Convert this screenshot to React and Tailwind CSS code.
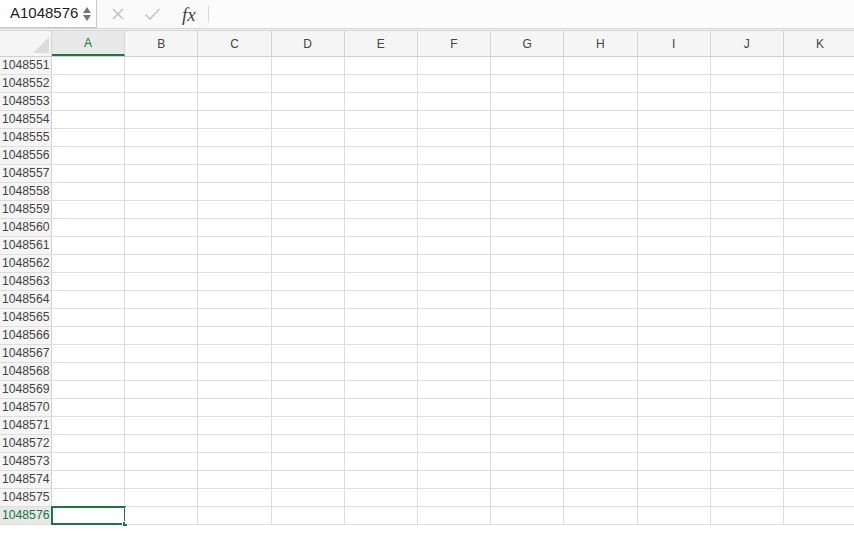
const COLS = ["A", "B", "C", "D", "E", "F", "G", "H", "I", "J", "K"];
const FIRST_ROW = 1048551;
const ROW_COUNT = 26;

const font = { fontFamily: '"Liberation Sans", Arial, sans-serif' };

const FormulaBar = () => (
  <div className="flex h-[29px] bg-[#fafafa] border-b border-[#d6d6d6]">
    <div className="flex w-[97px] items-center justify-between bg-white border-r border-b border-[#c8c8c8] pl-[10px] pr-[5px] h-[28px]">
      <span className="text-[15px] text-[#222]">A1048576</span>
      <div className="flex flex-col items-center gap-[2px]">
        <svg width="8" height="6" viewBox="0 0 8 6"><path d="M4 0 L8 6 L0 6 Z" fill="#777" /></svg>
        <svg width="8" height="6" viewBox="0 0 8 6"><path d="M0 0 L8 0 L4 6 Z" fill="#777" /></svg>
      </div>
    </div>
    <div className="flex items-center pl-[14px] gap-[19px]">
      <svg width="14" height="14" viewBox="0 0 14 14">
        <path d="M2 2 L12 12 M12 2 L2 12" stroke="#c4c4c4" strokeWidth="1.6" />
      </svg>
      <svg width="17" height="14" viewBox="0 0 17 14">
        <path d="M1.5 7.5 L6 12 L15.5 2" stroke="#c4c4c4" strokeWidth="1.6" fill="none" />
      </svg>
      <span
        className="text-[19px] italic text-[#444] leading-none ml-[2px]"
        style={{ fontFamily: '"Liberation Serif", "Times New Roman", serif' }}
      >
        fx
      </span>
    </div>
    <div className="ml-[12px] mt-[6px] h-[16px] w-px bg-[#d8d8d8]" />
    <div className="flex-1 bg-[#fcfcfc]" />
  </div>
);

const HeaderRow = () => (
  <div className="flex h-[26px] bg-[#f5f5f5] border-b border-[#cfcfcf]">
    <div className="relative w-[52px] shrink-0 border-r border-[#d4d4d4]">
      <svg className="absolute right-[2px] bottom-[3px]" width="16" height="16" viewBox="0 0 16 16">
        <path d="M16 0 L16 16 L0 16 Z" fill="#dcdcdc" />
      </svg>
    </div>
    {COLS.map((c) => (
      <div
        key={c}
        className={
          c === "A"
            ? "w-[73.2px] shrink-0 flex items-center justify-center text-[12px] text-[#217346] border-r border-[#d4d4d4] border-b-2 border-b-[#217346] bg-[#e8e8e8]"
            : "w-[73.2px] shrink-0 flex items-center justify-center text-[12px] text-[#444] border-r border-[#d4d4d4]"
        }
      >
        {c}
      </div>
    ))}
  </div>
);

const Row = ({ n, selected }) => (
  <div className="flex h-[18px] border-b border-[#dedede]">
    <div
      className={
        selected
          ? "w-[52px] shrink-0 flex items-center pl-[2px] text-[12.2px] text-[#217346] bg-[#e8e8e8] border-r border-[#d4d4d4]"
          : "w-[52px] shrink-0 flex items-center pl-[2px] text-[12.2px] text-[#444] bg-[#f5f5f5] border-r border-[#d4d4d4]"
      }
    >
      {n}
    </div>
    {COLS.map((c) => (
      <div key={c} className="relative w-[73.2px] shrink-0 border-r border-[#dedede] bg-white">
        {selected && c === "A" && (
          <div className="absolute -left-[1px] -top-[1px] w-[75px] h-[19px] border-2 border-[#217346]">
            <div className="absolute -right-[4px] -bottom-[4px] w-[6px] h-[6px] bg-[#217346] border border-white" />
          </div>
        )}
      </div>
    ))}
  </div>
);

export default function App() {
  const rows = Array.from({ length: ROW_COUNT }, (_, i) => FIRST_ROW + i);
  return (
    <div className="w-[854px] h-[536px] overflow-hidden bg-white" style={font}>
      <FormulaBar />
      <div className="h-[2px] bg-[#f0f0f0] border-b border-[#d6d6d6]" />
      <HeaderRow />
      {rows.map((n) => (
        <Row key={n} n={n} selected={n === 1048576} />
      ))}
    </div>
  );
}
